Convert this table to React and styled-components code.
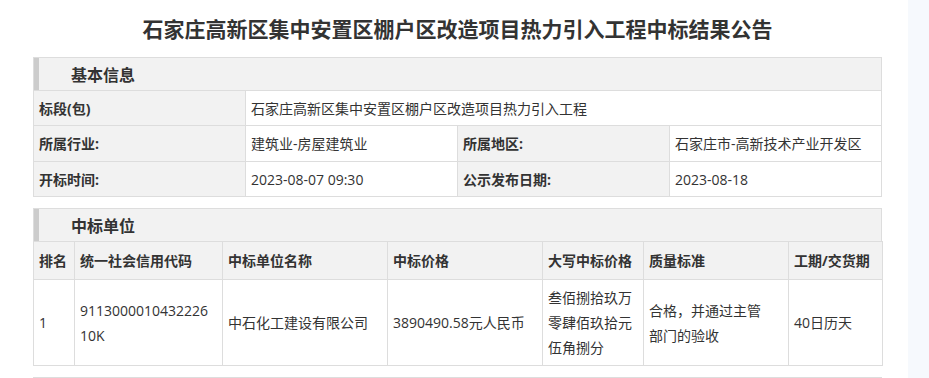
import React from 'react'
import styled, { createGlobalStyle } from 'styled-components'

const GlobalStyle = createGlobalStyle`
	html, body {
		margin: 0;
		padding: 0;
		background: #fff;
	}
	body {
		font-family: "Open Sans", "Noto Sans CJK SC", sans-serif;
		color: #333;
	}
`

const basicRows = [
	[{ label: '标段(包)', value: '石家庄高新区集中安置区棚户区改造项目热力引入工程', span: 3 }],
	[
		{ label: '所属行业:', value: '建筑业-房屋建筑业' },
		{ label: '所属地区:', value: '石家庄市-高新技术产业开发区' },
	],
	[
		{ label: '开标时间:', value: '2023-08-07 09:30' },
		{ label: '公示发布日期:', value: '2023-08-18' },
	],
]

const winnerCols = [
	{ title: '排名', width: 41 },
	{ title: '统一社会信用代码', width: 148 },
	{ title: '中标单位名称', width: 165 },
	{ title: '中标价格', width: 155 },
	{ title: '大写中标价格', width: 101 },
	{ title: '质量标准', width: 145 },
	{ title: '工期/交货期', width: 94 },
]

const winners = [
	[
		['1'],
		['9113000010432226', '10K'],
		['中石化工建设有限公司'],
		['3890490.58元人民币'],
		['叁佰捌拾玖万', '零肆佰玖拾元', '伍角捌分'],
		['合格，并通过主管', '部门的验收'],
		['40日历天'],
	],
]

const App = () => {
	return (
		<Page>
			<GlobalStyle />
			<Main>
				<Title>石家庄高新区集中安置区棚户区改造项目热力引入工程中标结果公告</Title>

				<Section>
					<SectionHead>基本信息</SectionHead>
					<Table>
						<colgroup>
							<col style={{ width: '25%' }} />
							<col style={{ width: '25%' }} />
							<col style={{ width: '25%' }} />
							<col style={{ width: '25%' }} />
						</colgroup>
						<tbody>
							{basicRows.map((row, i) => (
								<InfoRow key={i} $h={[35, 36, 35][i]}>
									{row.map((item) => (
										<React.Fragment key={item.label}>
											<LabelCell>{item.label}</LabelCell>
											<ValueCell colSpan={item.span || 1}>{item.value}</ValueCell>
										</React.Fragment>
									))}
								</InfoRow>
							))}
						</tbody>
					</Table>
				</Section>

				<Section>
					<SectionHead>中标单位</SectionHead>
					<Table>
						<colgroup>
							{winnerCols.map((c) => (
								<col key={c.title} style={{ width: c.width }} />
							))}
						</colgroup>
						<thead>
							<HeadRow>
								{winnerCols.map((c) => (
									<LabelCell key={c.title}>{c.title}</LabelCell>
								))}
							</HeadRow>
						</thead>
						<tbody>
							{winners.map((row, i) => (
								<DataRow key={i}>
									{row.map((lines, j) => (
										<ValueCell key={j}>
											{lines.map((l, k) => (
												<React.Fragment key={k}>
													{k > 0 && <br />}
													{l}
												</React.Fragment>
											))}
										</ValueCell>
									))}
								</DataRow>
							))}
						</tbody>
					</Table>
				</Section>

				<Section>
					<SectionHead />
				</Section>
			</Main>
			<Side />
		</Page>
	)
}

export default App

const Page = styled.div`
	display: flex;
	width: 929px;
	height: 378px;
	overflow: hidden;
`

const Main = styled.div`
	width: 908px;
	flex-shrink: 0;
	padding-left: 33px;
	box-sizing: border-box;
`

const Side = styled.div`
	flex: 1;
	background: #f6f9fd;
`

const Title = styled.h1`
	width: 849px;
	margin: 0;
	padding: 13px 0 14px;
	height: 30px;
	line-height: 30px;
	font-size: 21px;
	font-weight: bold;
	text-align: center;
	color: #333;
	font-family: "Noto Sans CJK SC", sans-serif;
`

const Section = styled.div`
	width: 849px;
	margin-bottom: 11px;
	border: 1px solid #ddd;
	box-sizing: border-box;
	border-bottom: none;
`

const SectionHead = styled.div`
	height: 32px;
	line-height: 32px;
	background: #f2f2f2;
	border-left: 5px solid #ccc;
	padding-left: 32px;
	font-size: 16px;
	font-weight: bold;
	color: #333;
	font-family: "Noto Sans CJK SC", sans-serif;
`

const Table = styled.table`
	width: calc(100% + 2px);
	margin: 0 -1px;
	border-collapse: collapse;
	table-layout: fixed;
	font-size: 14px;

	td,
	th {
		border: 1px solid #ddd;
		padding: 0 5px;
		text-align: left;
		vertical-align: middle;
		line-height: 25px;
	}
`

const InfoRow = styled.tr`
	height: ${(p) => p.$h}px;
`

const HeadRow = styled.tr`
	height: 38px;
`

const DataRow = styled.tr`
	height: 86px;
`

const LabelCell = styled.th`
	background: #f2f2f2;
	font-weight: bold;
	color: #333;
	white-space: nowrap;
`

const ValueCell = styled.td`
	background: #fff;
	color: #333;
	font-weight: normal;
`
